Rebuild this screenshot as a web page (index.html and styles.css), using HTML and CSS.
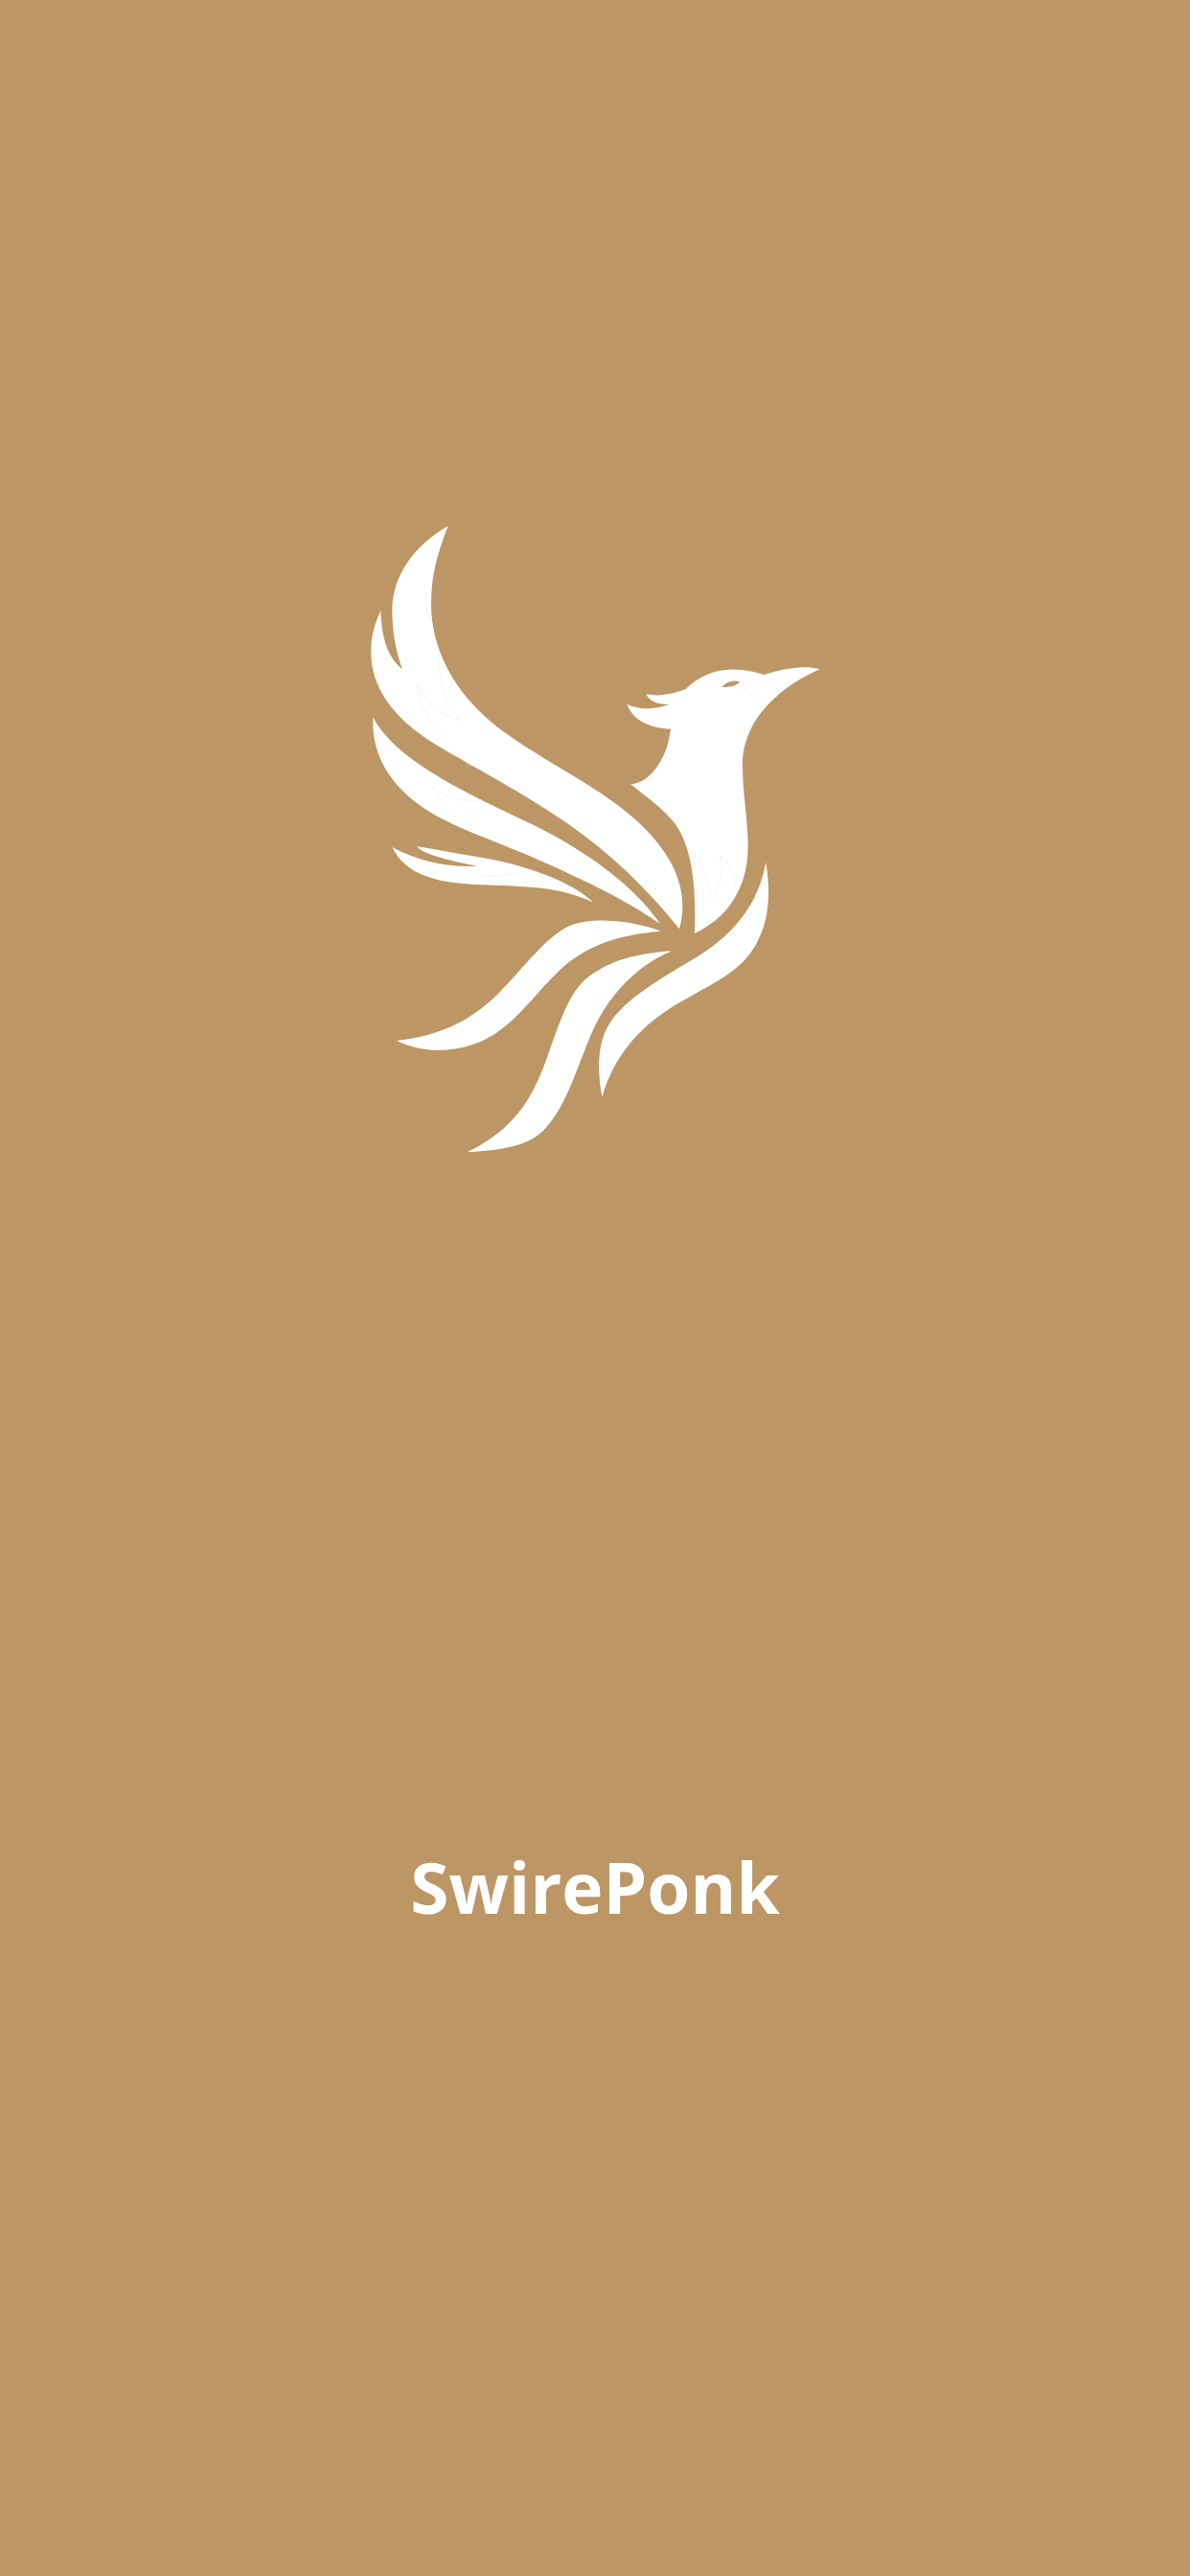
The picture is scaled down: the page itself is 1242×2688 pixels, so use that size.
FILE: index.html
```html
<!DOCTYPE html>
<html lang="en">
<head>
  <meta charset="UTF-8">
  <meta name="viewport" content="width=device-width, initial-scale=1.0">
  <title>SwirePonk</title>
  <link rel="stylesheet" href="styles.css">
</head>
<body>
  <div class="splash">
    <svg class="logo" viewBox="0 0 1506 2040" xmlns="http://www.w3.org/2000/svg" aria-hidden="true">
      <g class="logo-shape">
        <!-- wings -->
        <path d="M293 56C190 115 118 210 118 320C118 390 130 450 150 505C105 470 85 410 82 322C60 370 50 410 52 460C55 570 130 660 230 725C340 795 520 885 670 990C800 1080 920 1195 1017 1318C1050 1200 1000 1090 895 990C770 870 580 790 440 680C310 575 240 440 240 300C240 210 260 140 293 56Z"/>
        <path d="M58 655C52 770 110 870 225 945C320 1007 480 1055 640 1130C760 1185 870 1240 957 1302C880 1190 740 1080 555 990C400 915 130 800 58 655Z"/>
        <path d="M118 1062C160 1150 260 1175 400 1180C540 1185 640 1185 748 1235C680 1170 540 1120 400 1095C320 1082 260 1070 195 1060C215 1085 300 1105 385 1122C280 1125 200 1105 118 1062Z"/>
        <!-- tail -->
        <path d="M132 1668C290 1650 380 1590 450 1520C530 1440 590 1355 660 1315C720 1280 850 1285 960 1325C830 1335 720 1370 640 1450C550 1535 490 1640 370 1680C295 1705 210 1705 132 1668Z"/>
        <path d="M352 2017C500 1945 560 1850 610 1700C650 1590 680 1490 760 1450C830 1405 920 1392 993 1387C880 1435 790 1530 740 1650C690 1770 660 1880 590 1950C540 2000 450 2012 352 2017Z"/>
        <path d="M775 1845C760 1760 760 1680 795 1620C835 1550 930 1490 1040 1425C1170 1350 1260 1260 1288 1110C1305 1210 1295 1290 1265 1350C1225 1440 1140 1480 1050 1530C920 1600 820 1690 775 1845Z"/>
        <!-- body -->
        <path d="M1457 505C1400 490 1340 505 1282 522C1200 495 1110 495 1037 567C1000 580 960 592 913 583C925 610 955 615 985 615C945 630 900 635 853 615C875 670 930 690 990 692C980 780 930 860 865 865C920 910 970 945 1005 990C1060 1070 1070 1200 1065 1332C1170 1280 1232 1190 1232 1060C1232 970 1215 900 1215 800C1215 680 1310 570 1457 505Z"/>
      </g>
      <path class="logo-eye" d="M1150 560C1170 540 1190 538 1207 545C1190 560 1170 562 1150 560Z"/>
      <g class="logo-lines">
        <path d="M265 450C262 540 280 620 335 665C270 655 225 610 197 550C205 650 280 740 365 810"/>
        <path d="M243 870C280 910 340 920 400 915M243 870C265 925 310 965 355 995"/>
        <path d="M1282 522C1260 550 1240 565 1215 572C1245 585 1265 595 1275 620"/>
        <path d="M1045 1065C1085 1105 1105 1160 1120 1225C1150 1180 1155 1140 1145 1090C1175 1110 1190 1145 1195 1185"/>
        <path d="M545 1132C500 1150 450 1155 397 1150C415 1170 445 1178 480 1182"/>
      </g>
    </svg>
    <h1 class="brand">SwirePonk</h1>
  </div>
</body>
</html>
```
FILE: styles.css
```css
body {
  margin: 0;
  padding: 0;
  background-color: #bc9664;
}

.splash {
  height: 2688px;
  display: flex;
  flex-direction: column;
  align-items: center;
  padding-top: 530px;
  box-sizing: border-box;
  overflow: hidden;
}

.logo {
  width: 502px;
  height: 680px;
  flex-shrink: 0;
}

.logo-shape {
  fill: white;
}

.logo-eye {
  fill: #bc9664;
}

.logo-lines {
  fill: none;
  stroke: #f1e9de;
  stroke-width: 1.5;
}

.brand {
  margin: 713px 0 0 0;
  font-family: "Open Sans", "Noto Sans", sans-serif;
  font-size: 73px;
  font-weight: 700;
  line-height: 92px;
  color: white;
}
```
